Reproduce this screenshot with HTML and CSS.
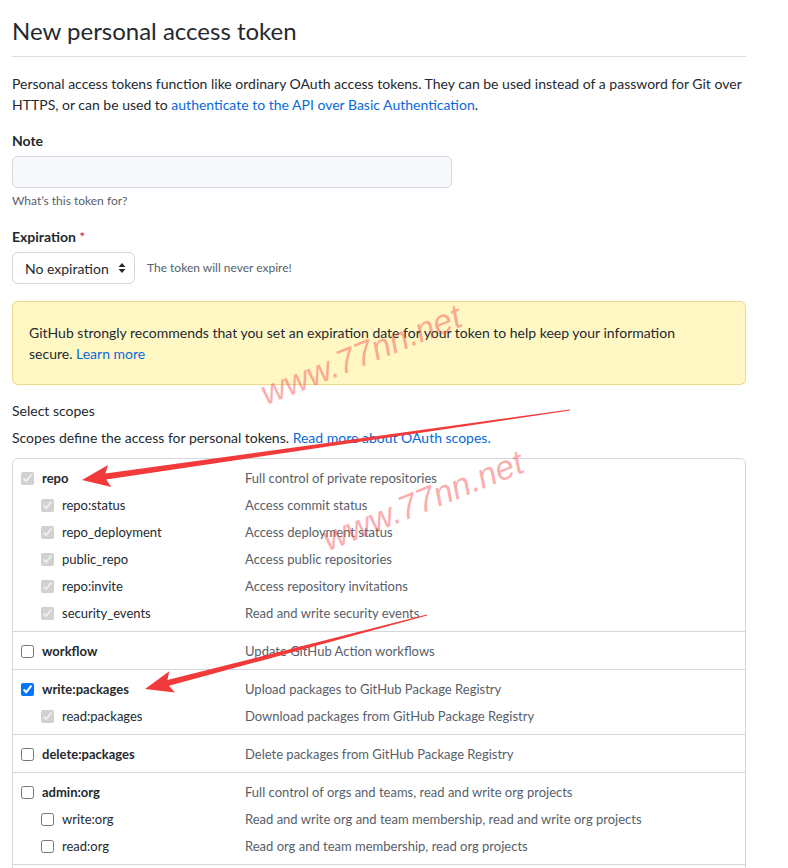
FILE: index.html
```html
<!DOCTYPE html>
<html lang="en">
<head>
    <meta charset="UTF-8">
    <title>New personal access token</title>
    <link rel="stylesheet" href="styles.css">
</head>
<body>
    <div class="page">
        <h2 class="subhead">New personal access token</h2>
        <p class="intro">
            Personal access tokens function like ordinary OAuth access tokens. They can be used instead of a password for Git over
            HTTPS, or can be used to <a href="#">authenticate to the API over Basic Authentication</a>.
        </p>

        <div class="field">
            <label class="field-label">Note</label>
            <input class="note-input" type="text">
            <p class="hint">What’s this token for?</p>
        </div>

        <div class="field">
            <label class="field-label">Expiration <span class="required">*</span></label>
            <div class="expiry">
                <div class="select">
                    <span>No expiration</span>
                    <svg width="8" height="12" viewBox="0 0 8 12">
                        <path d="M4 1 L7.5 5 H0.5 Z M4 11 L0.5 7 H7.5 Z" fill="#24292f"/>
                    </svg>
                </div>
                <span class="hint">The token will never expire!</span>
            </div>
        </div>

        <div class="flash-warn">
            GitHub strongly recommends that you set an expiration date for your token to help keep your information
            secure. <a href="#">Learn more</a>
        </div>

        <h3 class="scopes-title">Select scopes</h3>
        <p class="scopes-note">Scopes define the access for personal tokens. <a href="#">Read more about OAuth scopes.</a></p>

        <div class="scopes">
            <div class="scope-group">
                <label class="scope-row top">
                    <span class="name"><input type="checkbox" checked disabled>repo</span>
                    <span class="desc">Full control of private repositories</span>
                </label>
                <label class="scope-row">
                    <span class="name"><input type="checkbox" checked disabled>repo:status</span>
                    <span class="desc">Access commit status</span>
                </label>
                <label class="scope-row">
                    <span class="name"><input type="checkbox" checked disabled>repo_deployment</span>
                    <span class="desc">Access deployment status</span>
                </label>
                <label class="scope-row">
                    <span class="name"><input type="checkbox" checked disabled>public_repo</span>
                    <span class="desc">Access public repositories</span>
                </label>
                <label class="scope-row">
                    <span class="name"><input type="checkbox" checked disabled>repo:invite</span>
                    <span class="desc">Access repository invitations</span>
                </label>
                <label class="scope-row">
                    <span class="name"><input type="checkbox" checked disabled>security_events</span>
                    <span class="desc">Read and write security events</span>
                </label>
            </div>
            <div class="scope-group">
                <label class="scope-row top">
                    <span class="name"><input type="checkbox">workflow</span>
                    <span class="desc">Update GitHub Action workflows</span>
                </label>
            </div>
            <div class="scope-group">
                <label class="scope-row top">
                    <span class="name"><input type="checkbox" checked>write:packages</span>
                    <span class="desc">Upload packages to GitHub Package Registry</span>
                </label>
                <label class="scope-row">
                    <span class="name"><input type="checkbox" checked disabled>read:packages</span>
                    <span class="desc">Download packages from GitHub Package Registry</span>
                </label>
            </div>
            <div class="scope-group">
                <label class="scope-row top">
                    <span class="name"><input type="checkbox">delete:packages</span>
                    <span class="desc">Delete packages from GitHub Package Registry</span>
                </label>
            </div>
            <div class="scope-group">
                <label class="scope-row top">
                    <span class="name"><input type="checkbox">admin:org</span>
                    <span class="desc">Full control of orgs and teams, read and write org projects</span>
                </label>
                <label class="scope-row">
                    <span class="name"><input type="checkbox">write:org</span>
                    <span class="desc">Read and write org and team membership, read and write org projects</span>
                </label>
                <label class="scope-row">
                    <span class="name"><input type="checkbox">read:org</span>
                    <span class="desc">Read org and team membership, read org projects</span>
                </label>
            </div>
            <div class="scope-group">
                <label class="scope-row top">
                    <span class="name"><input type="checkbox">admin:public_key</span>
                    <span class="desc">Full control of user public keys</span>
                </label>
            </div>
        </div>

        <!-- watermark and annotation arrows over the form -->
        <div class="overlay">
            <span class="mark mark-1">www.77nn.net</span>
            <span class="mark mark-2">www.77nn.net</span>
            <svg class="arrows" width="788" height="868" viewBox="0 0 788 868">
                <polygon fill="#f23a3a" points="82,480 108.1,465.1 105.4,473.6 569.9,409.5 570.1,410.5 106.2,479.6 111.3,486.9"/>
                <polygon fill="#f23a3a" points="145,689 169.3,671.3 167.4,680 426.9,614.5 427.1,615.5 169,685.8 174.9,692.5"/>
            </svg>
        </div>
    </div>
</body>
</html>
```

FILE: styles.css
```css
body {
    margin: 0;
    background: #fff;
    color: #24292f;
    font-family: Lato, "Noto Sans", sans-serif;
    font-size: 14px;
    line-height: 21px;
}

a {
    color: #0969da;
    text-decoration: none;
}

.page {
    position: relative;
    width: 734px;
    padding: 0 0 40px 12px;
}

.subhead {
    margin: 0;
    padding: 16px 0 10px;
    border-bottom: 1px solid #d8dee4;
    font-size: 24px;
    line-height: 30px;
    font-weight: 400;
}

.intro {
    margin: 16px 0 0;
}

.field {
    margin-top: 15px;
}
.field + .field {
    margin-top: 16px;
}

.field-label {
    display: block;
    font-weight: 700;
}
    .field-label .required {
        color: #cf222e;
        font-weight: 400;
    }

.note-input {
    display: block;
    width: 440px;
    height: 32px;
    margin: 5px 0 0;
    box-sizing: border-box;
    border: 1px solid #d0d7de;
    border-radius: 6px;
    background: #f6f8fa;
}

.hint {
    margin: 4px 0 0;
    color: #57606a;
    font-size: 12px;
    line-height: 18px;
}

.expiry {
    display: flex;
    align-items: center;
    gap: 12px;
    margin-top: 5px;
}
    .expiry .hint {
        margin: 0;
    }

.select {
    display: flex;
    align-items: center;
    justify-content: space-between;
    width: 123px;
    height: 32px;
    box-sizing: border-box;
    padding: 0 8px 0 12px;
    border: 1px solid #d0d7de;
    border-radius: 6px;
    background: #fff;
}

.flash-warn {
    margin-top: 17px;
    padding: 20px 48px 20px 16px;
    border: 1px solid rgba(212, 167, 44, 0.4);
    border-radius: 6px;
    background: #fff8c5;
}

.scopes-title {
    margin: 15px 0 0;
    font-size: 14px;
    line-height: 21px;
    font-weight: 400;
}

.scopes-note {
    margin: 6px 0 0;
}

.scopes {
    margin-top: 10px;
    border: 1px solid #d0d7de;
    border-radius: 6px;
    font-size: 13px;
}
    .scope-group {
        padding: 6px 0 4px;
    }
    .scope-group + .scope-group {
        border-top: 1px solid #d0d7de;
    }
        .scope-row {
            display: grid;
            grid-template-columns: 232px 1fr;
            align-items: center;
            height: 27px;
        }
            .scope-row .name {
                display: flex;
                align-items: center;
                gap: 8px;
                padding-left: 28px;
            }
            .scope-row.top .name {
                padding-left: 8px;
                font-weight: 700;
            }
            .scope-row input {
                width: 13px;
                height: 13px;
                margin: 0;
            }
            .scope-row .desc {
                color: #57606a;
            }

.overlay {
    position: absolute;
    top: 0; left: 0;
    width: 788px; height: 868px;
    pointer-events: none;
}
    .mark {
        position: absolute;
        font: italic 34px/1 "Liberation Sans", sans-serif;
        color: rgba(248, 70, 70, 0.45);
        transform-origin: 0 100%;
        transform: rotate(-22deg);
        white-space: nowrap;
    }
    .mark-1 { left: 268px; top: 376px; }
    .mark-2 { left: 330px; top: 522px; }
    .arrows {
        position: absolute;
        top: 0; left: 0;
    }
```
